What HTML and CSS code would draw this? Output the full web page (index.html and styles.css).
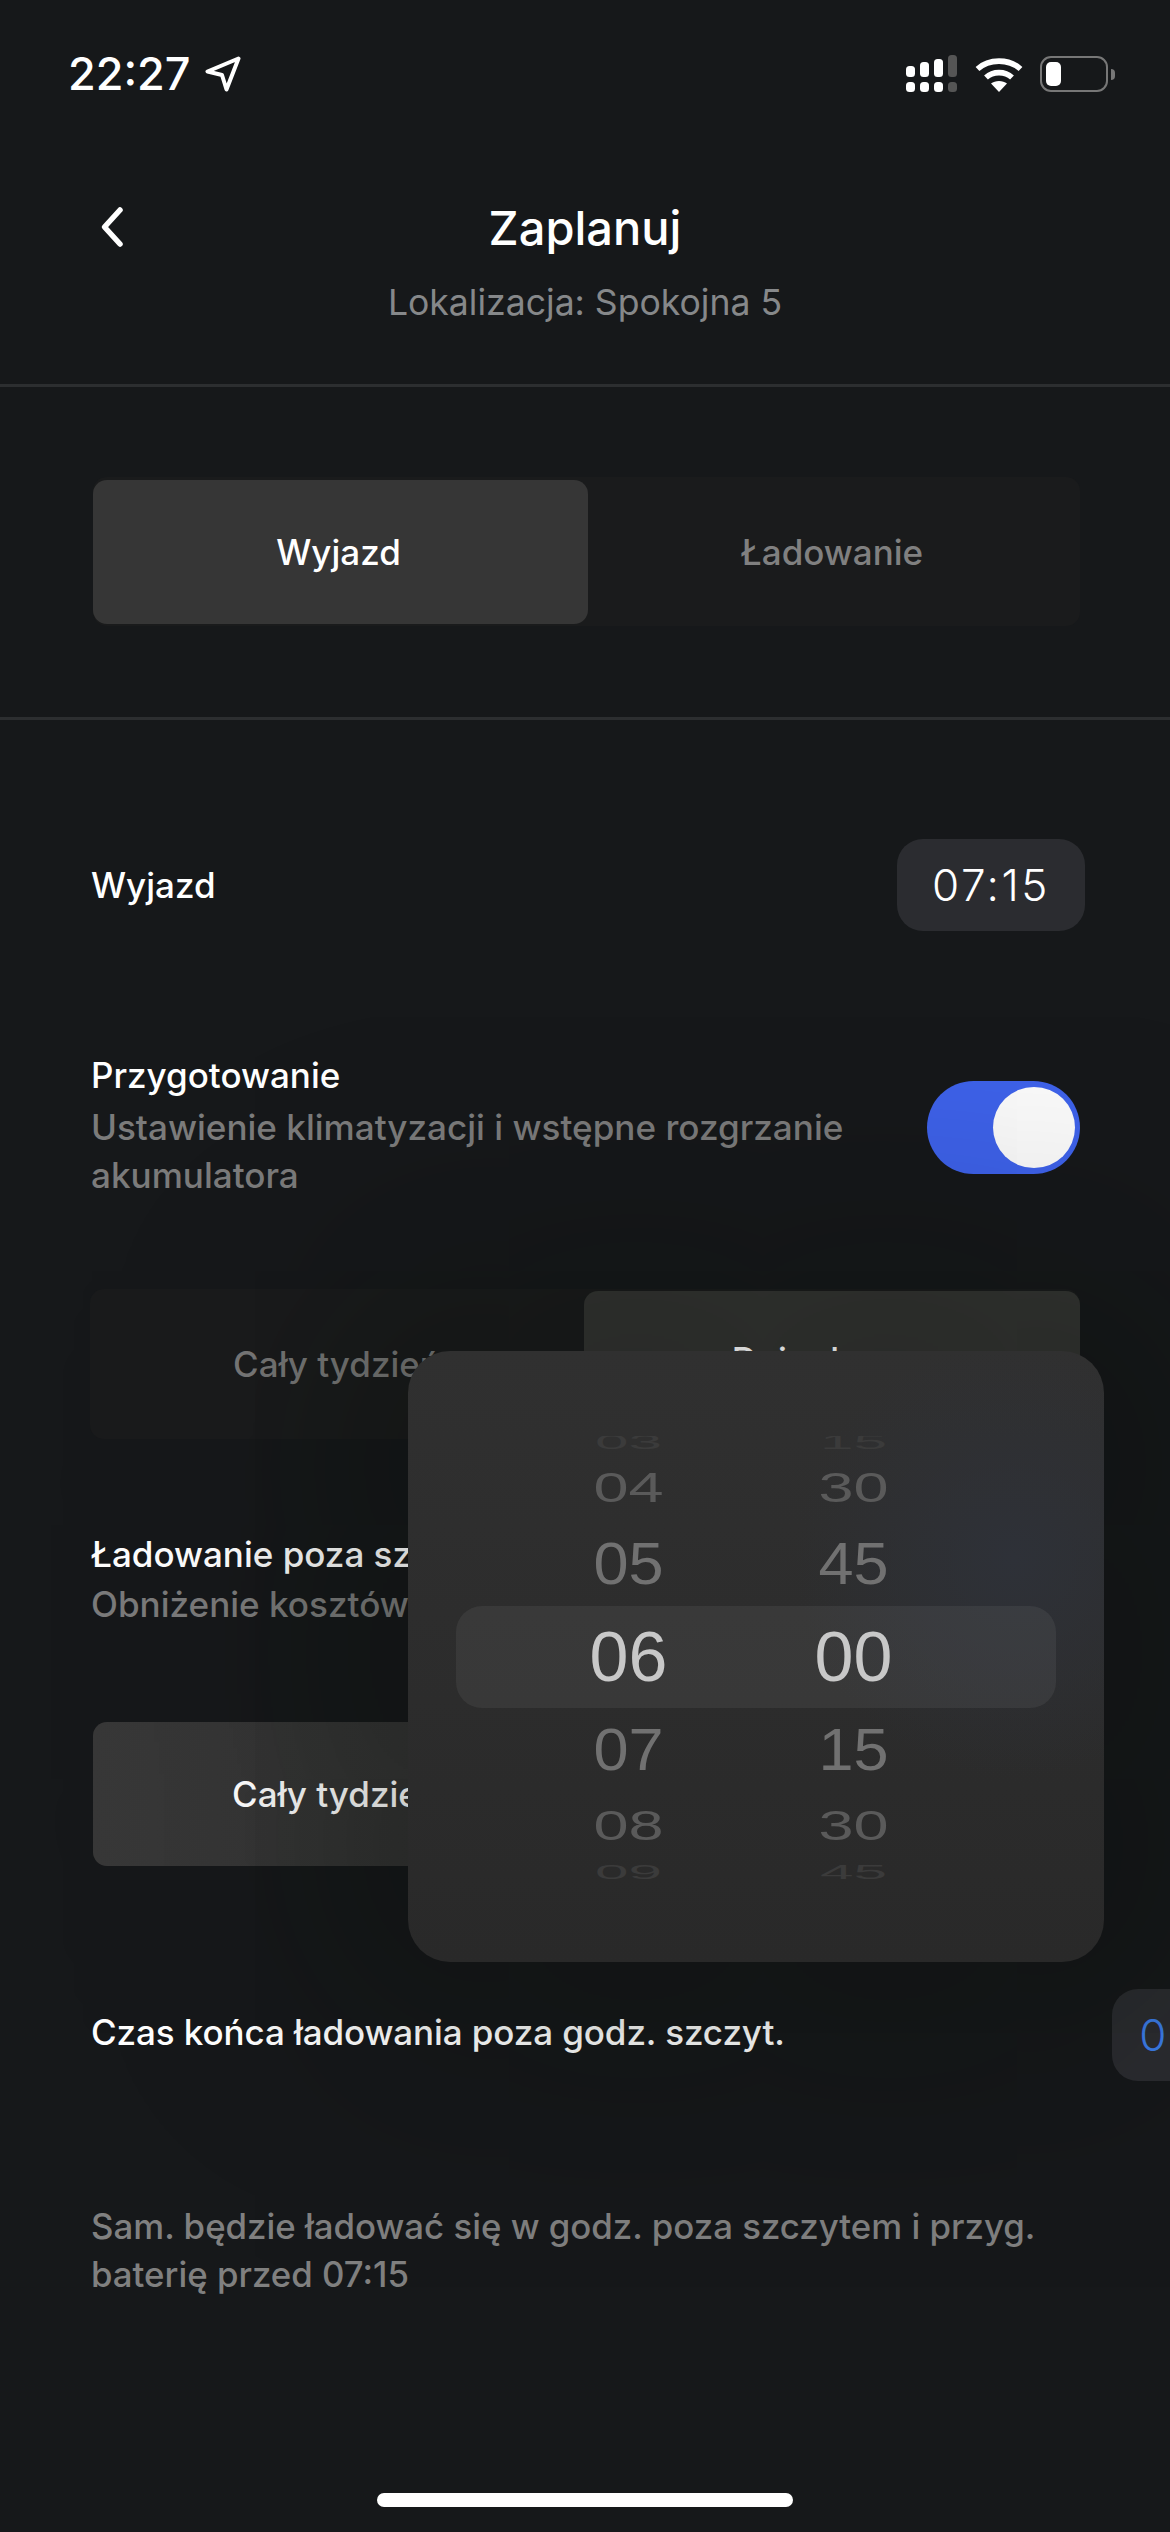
FILE: index.html
```html
<!DOCTYPE html>
<html lang="pl">
<head>
    <meta charset="UTF-8">
    <meta name="viewport" content="width=device-width, initial-scale=1.0">
    <title>Zaplanuj</title>
    <link rel="stylesheet" href="styles.css">
</head>
<body>
    <div class="screen">
        <div class="status-bar">
            <div class="status-left">
                <span class="clock">22:27</span>
                <svg class="location-icon" width="36" height="36" viewBox="0 0 36 36">
                    <path d="M33.5 2.5 L2.5 15.5 L17 19 L21.5 33.5 Z" fill="none" stroke="#fff" stroke-width="4" stroke-linejoin="round"/>
                </svg>
            </div>
            <div class="status-right">
                <svg class="signal-icon" width="52" height="38" viewBox="0 0 52 38">
                    <rect x="0" y="11" width="9" height="11" rx="3.5" fill="#fff"/>
                    <rect x="14" y="7" width="9" height="15" rx="3.5" fill="#fff"/>
                    <rect x="28" y="4" width="9" height="18" rx="3.5" fill="#fff"/>
                    <rect x="42" y="0" width="9" height="22" rx="3.5" fill="#555"/>
                    <rect x="0" y="27" width="9" height="10" rx="3.5" fill="#fff"/>
                    <rect x="14" y="27" width="9" height="10" rx="3.5" fill="#fff"/>
                    <rect x="28" y="27" width="9" height="10" rx="3.5" fill="#fff"/>
                    <rect x="42" y="27" width="9" height="10" rx="3.5" fill="#555"/>
                </svg>
                <svg class="wifi-icon" width="48" height="36" viewBox="0 0 48 36">
                    <path d="M2.5 13 C14 2.5 34 2.5 45.5 13" fill="none" stroke="#fff" stroke-width="5.6"/>
                    <path d="M11 21.5 C18 15 30 15 37 21.5" fill="none" stroke="#fff" stroke-width="5.6"/>
                    <path d="M24 36 L16 27.5 C20 24 28 24 32 27.5 Z" fill="#fff"/>
                </svg>
                <div class="battery">
                    <div class="battery-body"><div class="battery-level"></div></div>
                    <div class="battery-cap"></div>
                </div>
            </div>
        </div>

        <header class="top-bar">
            <svg class="back-icon" width="26" height="42" viewBox="0 0 26 42">
                <path d="M21 4 L5.5 21 L21 38" fill="none" stroke="#fff" stroke-width="5.5" stroke-linecap="round" stroke-linejoin="round"/>
            </svg>
            <h1>Zaplanuj</h1>
            <p class="location">Lokalizacja: Spokojna 5</p>
        </header>

        <section class="mode-section">
            <div class="segment">
                <div class="segment-item active">Wyjazd</div>
                <div class="segment-item">Ładowanie</div>
            </div>
        </section>

        <main class="settings">
            <div class="row row-departure">
                <span class="row-title">Wyjazd</span>
                <div class="time-pill">07:15</div>
            </div>

            <div class="row row-prepare">
                <div class="row-text">
                    <div class="row-title">Przygotowanie</div>
                    <div class="row-sub">Ustawienie klimatyzacji i wstępne rozgrzanie akumulatora</div>
                </div>
                <div class="toggle"><div class="toggle-knob"></div></div>
            </div>

            <div class="segment segment-dim">
                <div class="segment-item">Cały tydzień</div>
                <div class="segment-item active">Dni robocze</div>
            </div>

            <div class="row row-offpeak">
                <div class="row-text">
                    <div class="row-title">Ładowanie poza szczytem</div>
                    <div class="row-sub">Obniżenie kosztów ładowania</div>
                </div>
            </div>

            <div class="segment segment-week">
                <div class="segment-item active">Cały tydzień</div>
                <div class="segment-item">Dni robocze</div>
            </div>

            <div class="row row-end">
                <span class="row-title">Czas końca ładowania poza godz. szczyt.</span>
                <div class="time-pill time-pill-blue">06:00</div>
            </div>

            <p class="note">Sam. będzie ładować się w godz. poza szczytem i przyg. baterię przed 07:15</p>
        </main>

        <div class="home-indicator"></div>

        <!-- time picker opened over the settings -->
        <div class="picker">
            <div class="picker-highlight"></div>
            <div class="wheel">
                <span class="far">03</span>
                <span class="mid">04</span>
                <span class="near">05</span>
                <span class="current">06</span>
                <span class="near">07</span>
                <span class="mid">08</span>
                <span class="far">09</span>
            </div>
            <div class="wheel">
                <span class="far">15</span>
                <span class="mid">30</span>
                <span class="near">45</span>
                <span class="current">00</span>
                <span class="near">15</span>
                <span class="mid">30</span>
                <span class="far">45</span>
            </div>
        </div>
    </div>
</body>
</html>
```

FILE: styles.css
```css
* {
    box-sizing: border-box;
    margin: 0;
    padding: 0;
}

body {
    font-family: 'Inter', 'Noto Sans', sans-serif;
    background-color: #16181a;
    color: #fff;
    overflow: hidden;
}

.screen {
    position: relative;
    width: 1170px;
    height: 2532px;
    overflow: hidden;
}

/* status bar */
.status-bar {
    display: flex;
    justify-content: space-between;
    align-items: center;
    height: 111px;
    padding: 37px 55px 0 68px;
}

.status-left {
    display: flex;
    align-items: center;
    gap: 14px;
}

.clock {
    font-size: 45px;
    font-weight: 500;
    line-height: 38px;
}

.location-icon {
    display: block;
}

.status-right {
    display: flex;
    align-items: center;
}

.signal-icon {
    display: block;
    margin-right: 17px;
}

.wifi-icon {
    display: block;
    margin-right: 17px;
}

.battery {
    display: flex;
    align-items: center;
    gap: 3px;
}

.battery-body {
    width: 68px;
    height: 36px;
    padding: 4px;
    border: 2.5px solid #777;
    border-radius: 11px;
}

.battery-level {
    width: 15px;
    height: 100%;
    background-color: #fff;
    border-radius: 5px;
}

.battery-cap {
    width: 4px;
    height: 11px;
    background-color: #777;
    border-radius: 0 6px 6px 0;
}

/* header */
.top-bar {
    position: relative;
    height: 276px;
    padding-top: 89px;
    text-align: center;
    border-bottom: 3px solid #2c2e30;
}

.top-bar h1 {
    font-size: 47px;
    font-weight: 500;
    line-height: 56px;
}

.location {
    margin-top: 25px;
    font-size: 35.6px;
    line-height: 44px;
    color: #86888a;
}

.back-icon {
    position: absolute;
    left: 99px;
    top: 95px;
}

/* two-part switches */
.mode-section {
    height: 333px;
    padding: 90px 90px 0 93px;
    border-bottom: 3px solid #2c2e30;
}

.mode-section .segment-item {
    padding-right: 4px;
}

.segment {
    display: flex;
    height: 149px;
    background-color: #1a1b1c;
    border-radius: 14px;
}

.segment-item {
    display: flex;
    flex: 1;
    align-items: center;
    justify-content: center;
    font-size: 35px;
    font-weight: 500;
    color: #808080;
    border-radius: 14px;
}

.segment-item.active {
    flex: 0 0 495px;
    color: #fff;
    background-color: #363636;
    margin: 3px 0 2px;
}

.segment-dim {
    width: 990px;
    height: 150px;
    margin: 0 0 0 -1px;
}

.segment-dim .segment-item {
    color: #777;
}

.segment-dim .segment-item.active {
    flex: 0 0 496px;
    padding-bottom: 10px;
    color: #fff;
    background-color: #333432;
    margin: 2px 0 0;
}

.segment-week {
    height: 144px;
    margin-top: 94px;
    margin-left: 2px;
}

.segment-week .segment-item.active {
    flex: 0 0 486px;
    margin: 0;
    background-image: linear-gradient(90deg, #383838, #303030);
}

/* settings list */
.settings {
    padding: 0 90px 0 91px;
}

.row {
    display: flex;
    align-items: center;
    justify-content: space-between;
}

.row-title {
    font-size: 35px;
    font-weight: 500;
    line-height: 48px;
    white-space: nowrap;
}

.row-sub {
    margin-top: 4px;
    font-size: 35.1px;
    font-weight: 500;
    line-height: 48px;
    color: #7b7b7b;
}

.row-departure {
    height: 92px;
    margin-top: 119px;
}

.time-pill {
    flex-shrink: 0;
    width: 188px;
    height: 92px;
    margin-right: -5px;
    font-size: 44px;
    font-weight: 300;
    line-height: 92px;
    text-align: center;
    letter-spacing: 2.5px;
    background-color: #2b2c30;
    border-radius: 26px;
}

.row-prepare {
    margin-top: 120px;
    margin-bottom: 90px;
}

.row-prepare .row-text {
    width: 790px;
}

.toggle {
    flex-shrink: 0;
    width: 153px;
    height: 93px;
    padding: 6px 5px;
    margin-top: 4px;
    background-color: #3e62ea;
    border-radius: 47px;
    display: flex;
    justify-content: flex-end;
}

.toggle-knob {
    width: 82px;
    height: 81px;
    background-color: #fbfbfb;
    border-radius: 50%;
}

.row-offpeak {
    margin-top: 91px;
}

.row-offpeak .row-sub {
    margin-top: 2px;
    white-space: nowrap;
}

.row-end {
    height: 93px;
    margin-top: 122px;
    justify-content: flex-start;
    gap: 327px;
}

.row-end .row-title {
    margin-bottom: 5px;
    letter-spacing: -0.1px;
}

.time-pill-blue {
    color: #3b7ce8;
    margin-right: 0;
}

.note {
    margin-top: 121px;
    font-size: 34.8px;
    font-weight: 500;
    line-height: 48px;
    color: #808080;
}

.home-indicator {
    position: absolute;
    left: 377px;
    top: 2493px;
    width: 416px;
    height: 14px;
    background-color: #fff;
    border-radius: 7px;
}

/* time picker popover */
.picker {
    position: absolute;
    left: 408px;
    top: 1351px;
    width: 696px;
    height: 611px;
    padding: 75px 0 0 108px;
    display: flex;
    background-color: #2b2b2b;
    background-image: radial-gradient(circle at 87% 34%, #2e3138 0, rgba(46, 49, 56, 0) 30%), linear-gradient(180deg, #303030, #292929);
    border-radius: 42px;
    box-shadow: 0 0 260px 90px rgba(0, 10, 0, 0.3);
}

.picker-highlight {
    position: absolute;
    left: 48px;
    top: 255px;
    width: 600px;
    height: 102px;
    background-color: rgba(255, 255, 255, 0.06);
    border-radius: 26px;
}

.wheel {
    position: relative;
    display: flex;
    flex-direction: column;
    width: 225px;
    height: 462px;
    font-family: 'Liberation Sans', Arial, sans-serif;
    font-size: 70px;
    text-align: center;
    clip-path: inset(10px 0 8px 0);
}

.wheel span {
    display: flex;
    align-items: center;
    justify-content: center;
}

.wheel .far {
    height: 32px;
    color: #3b3b3b;
    transform: scale(0.86, 0.3);
}

.wheel .mid {
    height: 60px;
    color: #5a5a5a;
    transform: scale(0.9, 0.6);
}

.wheel .near {
    height: 92px;
    color: #717171;
    transform: scale(0.9, 0.85);
}

.wheel .current {
    height: 94px;
    color: #c8c8c8;
}
```
